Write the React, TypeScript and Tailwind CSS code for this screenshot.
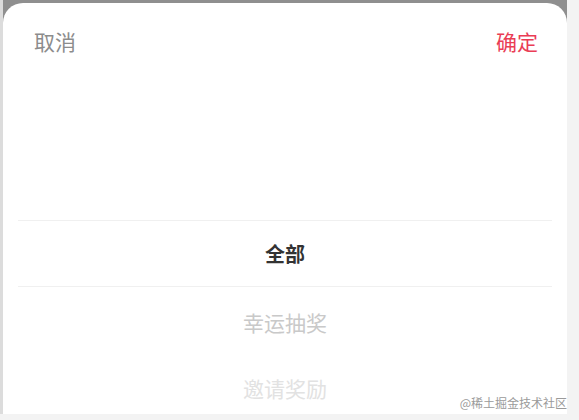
const options = [
  { label: "全部", cls: "h-[67px] border-y border-[#f0f0f0] font-bold text-[20px] text-[#333333]" },
  { label: "幸运抽奖", cls: "h-[66px] pt-[6px] text-[21px] text-[#c9c9c9]" },
  { label: "邀请奖励", cls: "h-[66px] pt-[6px] text-[21px] text-[#e2e2e2]" },
];

export default function App() {
  return (
    <div
      className="w-[579px] h-[420px] bg-[#f3f3f3] overflow-hidden relative"
      style={{ fontFamily: '"Noto Sans CJK SC", "Noto Sans", sans-serif' }}
    >
      <div className="w-[567px] h-[414px] border-l-[3px] border-[#dcdcdc] bg-[#8f8f8f] pt-[3px]">
        <div className="h-full bg-white rounded-t-[20px] overflow-hidden">
          <div className="flex justify-between items-center pl-[31px] pr-[29px] pt-[23px] text-[21px] leading-[30px]">
            <span className="text-[#8c8c8c]">取消</span>
            <span className="text-[#ea3d55]">确定</span>
          </div>
          <div className="mt-[164px] mx-[15px]">
            {options.map((o) => (
              <div key={o.label} className={`flex items-center justify-center ${o.cls}`}>
                {o.label}
              </div>
            ))}
          </div>
        </div>
      </div>
      <span className="absolute right-[12px] bottom-[11px] text-[12px] leading-none text-[#9a9a9a]">
        @稀土掘金技术社区
      </span>
    </div>
  );
}
